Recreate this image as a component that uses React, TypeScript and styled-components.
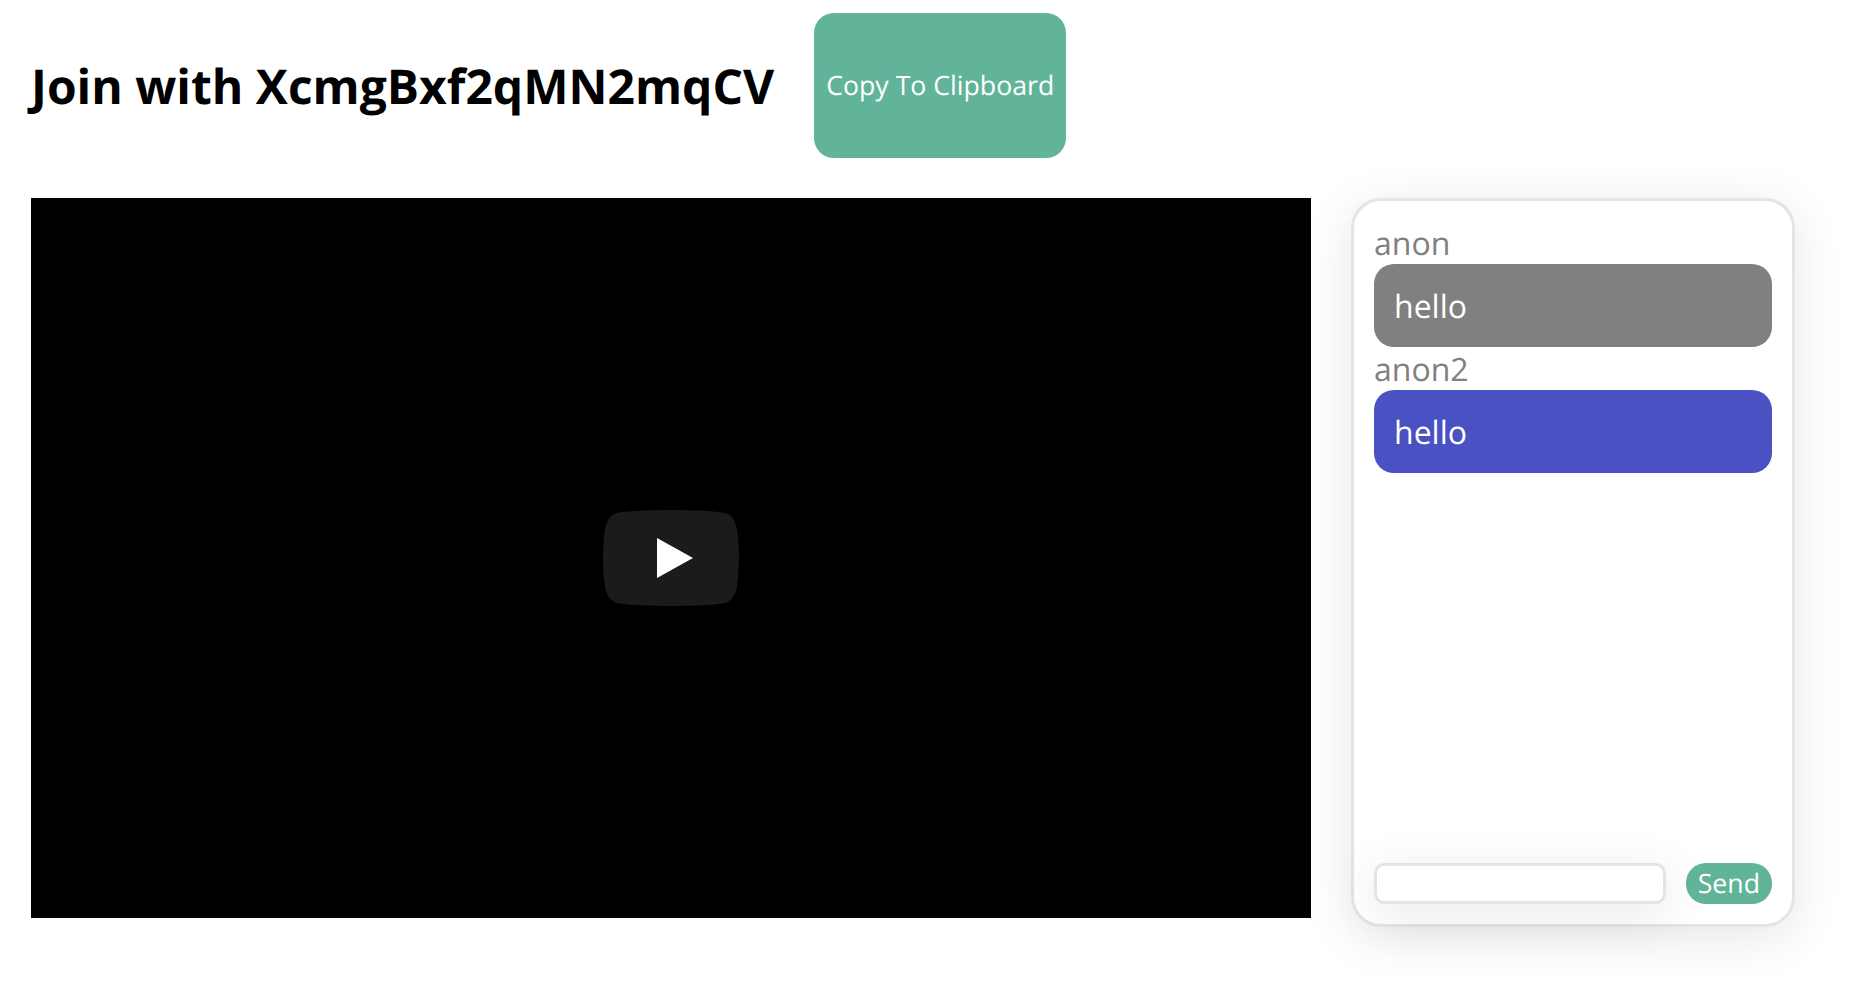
import React from "react";
import styled, { createGlobalStyle } from "styled-components";

const GlobalStyle = createGlobalStyle`
  * { box-sizing: border-box; }
  body {
    margin: 0;
    background: #fff;
    font-family: "Open Sans", sans-serif;
    font-size: 32px;
    line-height: 43px;
    text-rendering: geometricPrecision;
  }
`;

const Page = styled.main`
  display: flex;
  flex-direction: column;
  gap: 40px;
  min-height: 100vh;
  padding: 13px 31px 0;
`;

const Header = styled.header`
  display: flex;
  align-items: center;
  gap: 40px;
  height: 145px;
`;

const Title = styled.h1`
  margin: 0;
  padding-top: 2px;
  font-size: 48px;
  font-weight: 700;
  line-height: 65px;
  white-space: nowrap;
`;

const Button = styled.button`
  align-self: stretch;
  flex: none;
  padding: 0 12px;
  border: 0;
  border-radius: 20px;
  background: #61b499;
  color: #fff;
  font-family: inherit;
  font-size: 26.667px;
  line-height: 37px;
  text-rendering: inherit;
  white-space: nowrap;
`;

const Content = styled.div`
  display: flex;
  align-items: flex-start;
  gap: 40px;
`;

const Player = styled.div`
  display: flex;
  align-items: center;
  justify-content: center;
  flex: none;
  width: 1280px;
  height: 720px;
  background: #000;
  /* keeps the chat shadow off the video */
  position: relative;
  z-index: 1;
`;

const Chat = styled.section`
  display: flex;
  flex-direction: column;
  flex: none;
  width: 444px;
  height: 729px;
  padding: 20px;
  border: 3px solid #e4e4e4;
  border-radius: 30px;
  box-shadow: 0 10px 50px rgba(0, 0, 0, 0.1);
`;

const Messages = styled.div`
  flex: 1;
`;

const Author = styled.div`
  height: 43px;
  padding-top: 1px;
  color: #808080;
`;

const Bubble = styled.div<{ $color: string }>`
  padding: 21px 20px 19px;
  border-radius: 20px;
  background: ${(p) => p.$color};
  color: #fff;
`;

const Composer = styled.form`
  display: flex;
  gap: 20px;
  height: 41px;
`;

const Input = styled.input`
  flex: 1;
  min-width: 0;
  padding: 2px 8px;
  border: 3px solid #e4e4e4;
  border-radius: 10px;
  background: #fff;
  font: inherit;
  font-size: 26.667px;
  outline: none;
  box-shadow: 0 10px 50px rgba(0, 0, 0, 0.1);
`;

const messages = [
  { author: "anon", text: "hello", color: "#808080" },
  { author: "anon2", text: "hello", color: "#4a51c3" },
];

const PlayIcon = () => (
  <svg width="136" height="96" viewBox="0 0 68 48">
    <path
      fill="#1b1b1b"
      d="M66.52 7.74c-.78-2.93-2.49-5.41-5.42-6.19C55.79.13 34 0 34 0S12.21.13 6.9 1.55c-2.93.78-4.63 3.26-5.42 6.19C.06 13.05 0 24 0 24s.06 10.95 1.48 16.26c.78 2.93 2.49 5.41 5.42 6.19C12.21 47.87 34 48 34 48s21.79-.13 27.1-1.55c2.93-.78 4.64-3.26 5.42-6.19C67.94 34.95 68 24 68 24s-.06-10.95-1.48-16.26z"
    />
    <path fill="#fff" d="M45 24 27 14v20" />
  </svg>
);

export default function App() {
  return (
    <>
      <GlobalStyle />
      <Page>
        <Header>
          <Title>Join with XcmgBxf2qMN2mqCV</Title>
          <Button>Copy To Clipboard</Button>
        </Header>
        <Content>
          <Player>
            <PlayIcon />
          </Player>
          <Chat>
            <Messages>
              {messages.map((m) => (
                <React.Fragment key={m.author}>
                  <Author>{m.author}</Author>
                  <Bubble $color={m.color}>{m.text}</Bubble>
                </React.Fragment>
              ))}
            </Messages>
            <Composer>
              <Input />
              <Button type="button">Send</Button>
            </Composer>
          </Chat>
        </Content>
      </Page>
    </>
  );
}
